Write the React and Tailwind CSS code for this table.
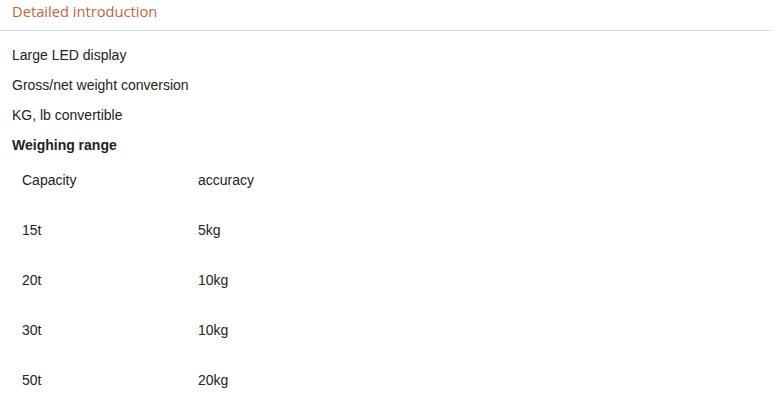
export default function App() {
  const rows = [
    ['Capacity', 'accuracy'],
    ['15t', '5kg'],
    ['20t', '10kg'],
    ['30t', '10kg'],
    ['50t', '20kg'],
  ];

  return (
    <div className="w-[780px] h-[410px] overflow-hidden bg-white font-['Liberation_Sans',Arial,sans-serif] text-[14px] text-[#222]">
      <div className="w-[772px] h-[31px] border-b border-[#ddd] pl-3">
        <h3 className="text-[14.7px] leading-[23px] text-[#c0653d] font-normal font-['Open_Sans','Liberation_Sans',sans-serif]">
          Detailed introduction
        </h3>
      </div>

      <div className="pl-3 pt-[9px]">
        <p className="leading-[30px]">Large LED display</p>
        <p className="leading-[30px]">Gross/net weight conversion</p>
        <p className="leading-[30px]">KG, lb convertible</p>
        <p className="leading-[30px] font-bold">Weighing range</p>
      </div>

      <div className="-mt-[5px] pl-[22px]">
        {rows.map(([cap, acc]) => (
          <div key={cap} className="flex h-[50px] items-center">
            <span className="w-[176px]">{cap}</span>
            <span>{acc}</span>
          </div>
        ))}
      </div>
    </div>
  );
}
